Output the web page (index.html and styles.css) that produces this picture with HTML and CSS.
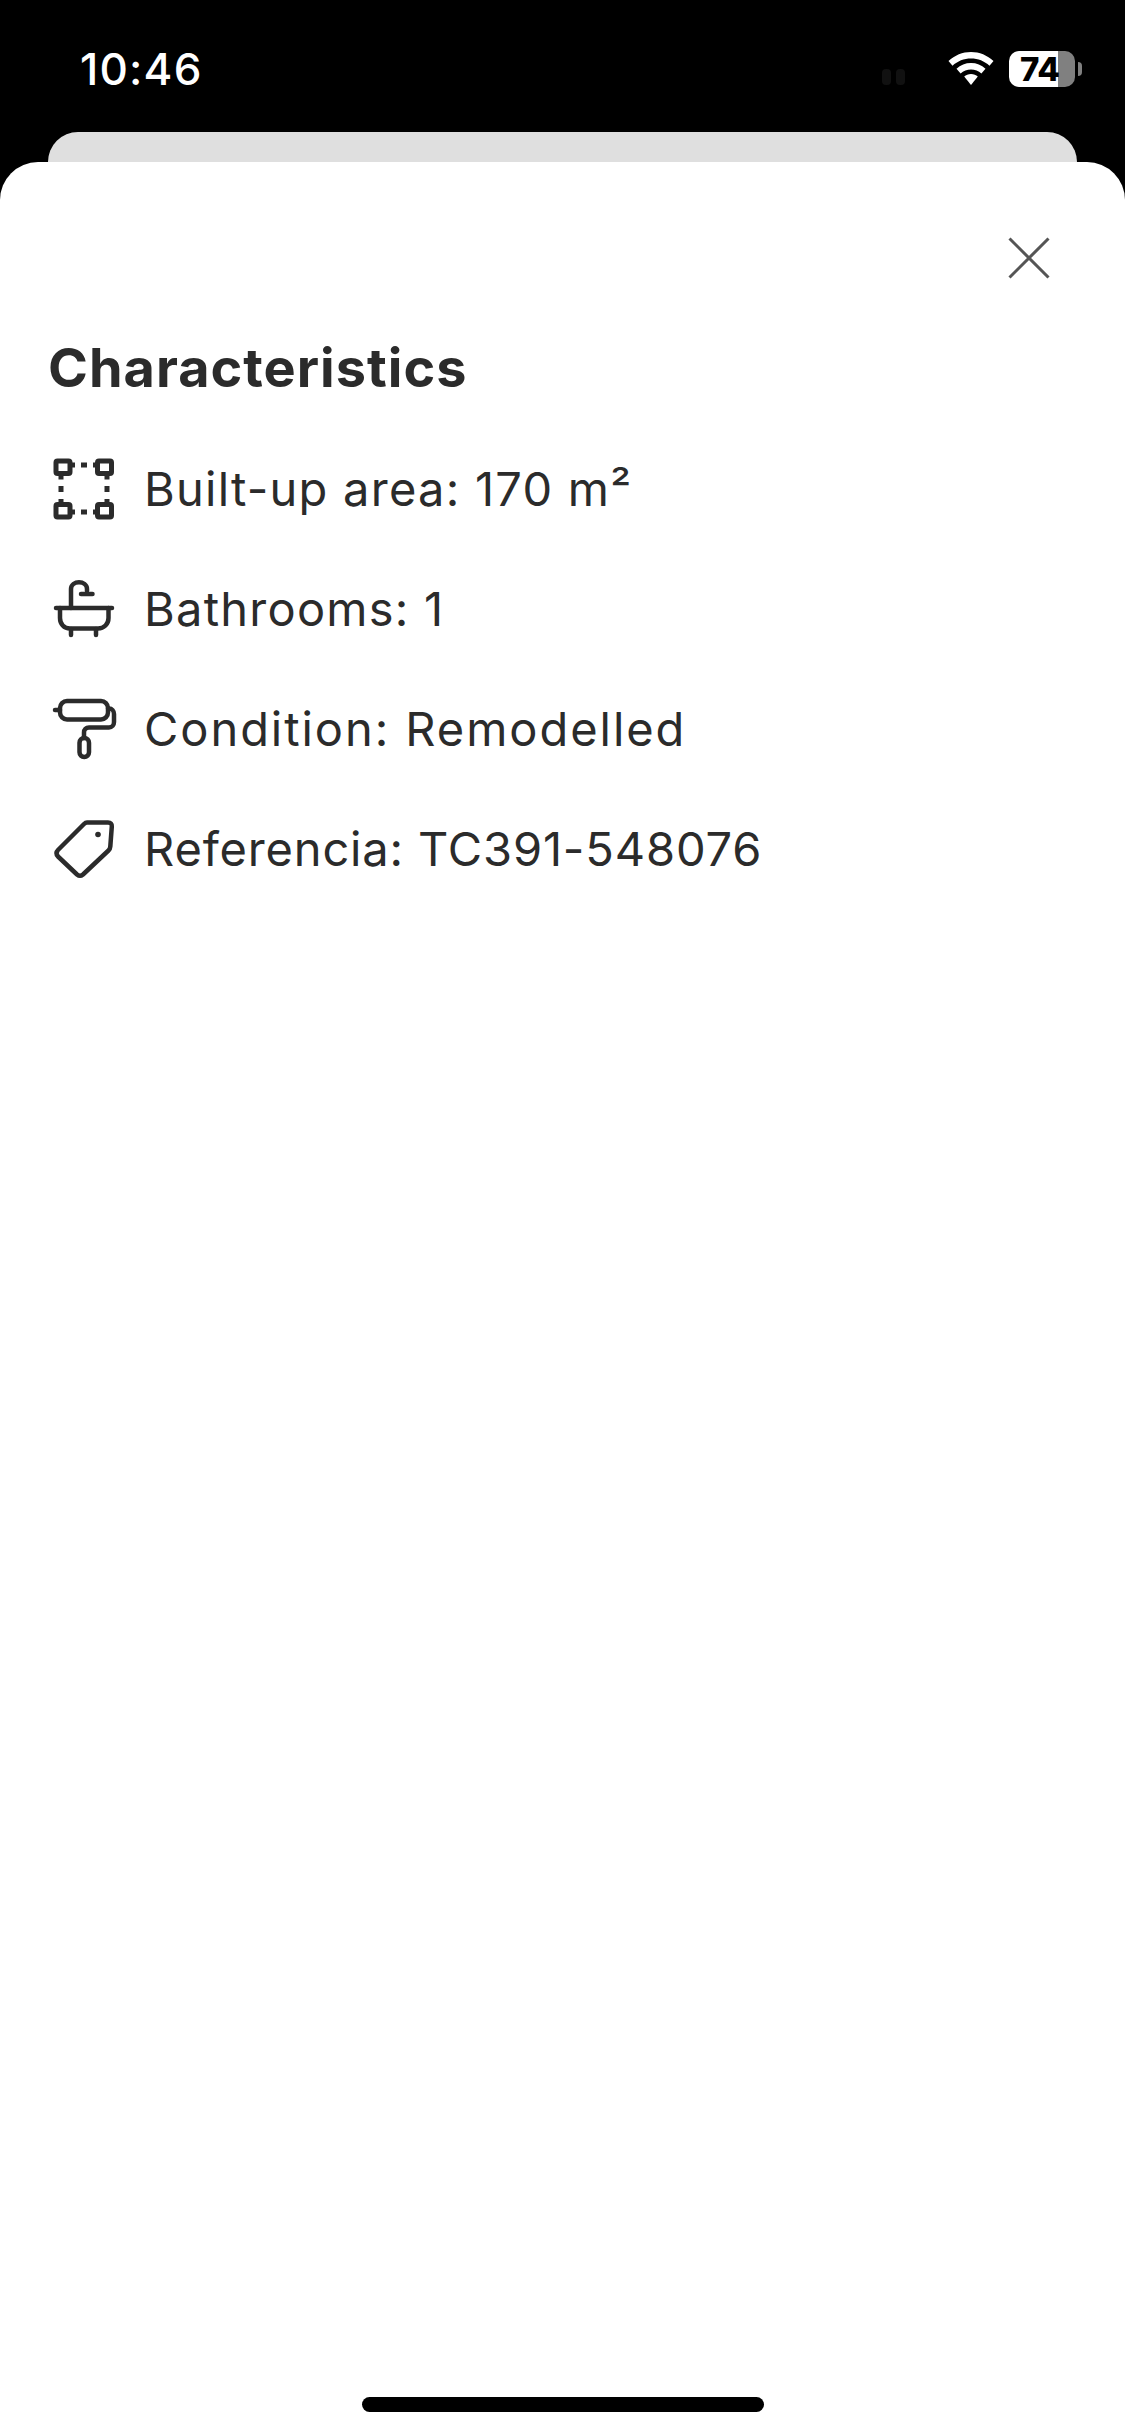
FILE: index.html
```html
<!DOCTYPE html>
<html lang="en">
<head>
<meta charset="utf-8">
<title>Characteristics</title>
<link rel="stylesheet" href="styles.css">
</head>
<body>
<div class="screen">
  <header class="status">
    <span class="time">10:46</span>
    <div class="status-right">
      <span class="dots"><i></i><i></i></span>
      <svg class="wifi" width="46" height="34" viewBox="0 0 46 34"><path d="M23 0C14.500 0 6.700 3.300 0.500 9L4.500 13.800C9.500 9 16 6.500 23 6.500S36.500 9 41.500 13.800L45.500 9C39.300 3.300 31.500 0 23 0Z" fill="#fff"/><path d="M23 11C17.500 11 12.500 13 8.500 16.800L12.600 21.600C15.500 19 19 17.500 23 17.500S30.500 19 33.400 21.600L37.500 16.800C33.500 13 28.500 11 23 11Z" fill="#fff"/><path d="M23 22C20.300 22 18 23 16.200 24.500L23 33L29.800 24.500C28 23 25.700 22 23 22Z" fill="#fff"/></svg>
      <div class="battery">
        <div class="battery-body"><span class="battery-level">74</span></div>
        <span class="battery-tip"></span>
      </div>
    </div>
  </header>
  <div class="back-card"></div>
  <main class="sheet">
    <div class="sheet-top">
      <svg class="close" width="42" height="42" viewBox="0 0 42 42"><path d="M1.500 1.500L40.500 40.500M40.500 1.500L1.500 40.500" stroke="#555" stroke-width="3" fill="none"/></svg>
    </div>
    <h1 class="title">Characteristics</h1>
    <ul class="list">
      <li class="row">
        <svg class="icon" width="72" height="72" viewBox="0 0 72 72"><g fill="none" stroke="#2b2b2b" stroke-width="5" stroke-linejoin="round"><rect x="8" y="8" width="14" height="12.500" rx="1.500"/><rect x="49.500" y="8" width="14" height="12.500" rx="1.500"/><rect x="8" y="51.500" width="14" height="12.500" rx="1.500"/><rect x="49.500" y="51.500" width="14" height="12.500" rx="1.500"/><path d="M22 12h5M13 20v6.500M45 12h5M59 20v6.500M13 52v-6M59 52v-6M22 59h5M45 59h5M33 12h6M33 59h6M13 33v6M59 33v6"/></g></svg>
        <span class="label">Built-up area: 170 m²</span>
      </li>
      <li class="row">
        <svg class="icon" width="72" height="72" viewBox="0 0 72 72"><g fill="none" stroke="#2b2b2b" stroke-width="4.500" stroke-linecap="round" stroke-linejoin="round"><path d="M8 35H64"/><path d="M12 35V45C12 51 16 55.500 22 55.500H50C56 55.500 60.500 51 60.500 45V35"/><path d="M23 56V62M48 56V62"/><path d="M23 35V16C23 7 39 7 39 16V18"/><path d="M33 21H44.500"/></g></svg>
        <span class="label">Bathrooms: 1</span>
      </li>
      <li class="row">
        <svg class="icon" width="72" height="72" viewBox="0 0 72 72"><g fill="none" stroke="#2b2b2b" stroke-width="4.500" stroke-linecap="round" stroke-linejoin="round"><rect x="12" y="8" width="48" height="18.500" rx="7"/><path d="M7 17H12"/><path d="M60 15.500H61C64 15.500 66 18 66 21V29C66 32 64 34.500 61 34.500H41C38 34.500 36 36.500 36 39.500V45"/><rect x="31.500" y="45" width="9.500" height="19" rx="4.700"/></g></svg>
        <span class="label label-wide">Condition: Remodelled</span>
      </li>
      <li class="row">
        <svg class="icon" width="72" height="72" viewBox="0 0 72 72"><path d="M39 9.500H60Q64 9.500 63.800 13.500L62.300 33.500Q62.100 36 60.500 37.500L35 61.500Q32 64 29 61.500L10 43.500Q7 40 10 37L36 11Q37.500 9.500 39 9.500Z" fill="none" stroke="#2b2b2b" stroke-width="4.500" stroke-linejoin="round"/><circle cx="50" cy="21.500" r="2.800" fill="#2b2b2b"/></svg>
        <span class="label label-tight">Referencia: TC391-548076</span>
      </li>
    </ul>
    <div class="home-bar"></div>
  </main>
</div>
</body>
</html>
```

FILE: styles.css
```css
* {
  box-sizing: border-box;
  margin: 0;
  padding: 0;
}

html,
body {
  width: 1125px;
  height: 2436px;
  overflow: hidden;
  background: #000;
}

.screen {
  display: flex;
  flex-direction: column;
  width: 1125px;
  height: 2436px;
  background: #000;
  font-family: Inter, "Liberation Sans", sans-serif;
}

.status {
  display: flex;
  align-items: flex-start;
  justify-content: space-between;
  height: 132px;
  padding: 44px 43px 0 80px;
  color: #fff;
}

.time {
  font-size: 44px;
  line-height: 50px;
  font-weight: 500;
  letter-spacing: 1.2px;
}

.status-right {
  display: flex;
  align-items: flex-start;
  padding-top: 7px;
}

.dots {
  display: flex;
  gap: 5px;
  margin: 18px 43px 0 0;
}

.dots i {
  width: 9px;
  height: 16px;
  border-radius: 4px;
  background: #111;
}

.wifi {
  margin: 1px 15px 0 0;
}

.battery {
  display: flex;
  align-items: center;
  gap: 3px;
}

.battery-body {
  display: flex;
  align-items: center;
  justify-content: center;
  width: 66px;
  height: 36px;
  padding-right: 4px;
  border-radius: 10px;
  background: linear-gradient(to right, #fff 49px, #808080 49px);
}

.battery-level {
  font-size: 33px;
  line-height: 36px;
  font-weight: 800;
  color: #000;
}

.battery-tip {
  width: 4px;
  height: 14px;
  border-radius: 0 4px 4px 0;
  background: #808080;
}

.back-card {
  flex: none;
  height: 30px;
  margin: 0 48px;
  border-radius: 30px 30px 0 0;
  background: #dfdfdf;
}

.sheet {
  display: flex;
  flex: 1;
  flex-direction: column;
  padding: 75px 48px 24px;
  border-radius: 38px 38px 0 0;
  background: #fff;
  color: #2b2b2b;
}

.sheet-top {
  display: flex;
  justify-content: flex-end;
  padding-right: 27px;
}

.title {
  margin-top: 55px;
  font-size: 54px;
  line-height: 68px;
  font-weight: 700;
  letter-spacing: 1px;
}

.list {
  display: flex;
  flex: 1;
  flex-direction: column;
  gap: 48px;
  margin-top: 51px;
  list-style: none;
}

.row {
  display: flex;
  align-items: center;
  gap: 24px;
  height: 72px;
}

.icon {
  flex: none;
}

.label {
  font-size: 47px;
  line-height: 60px;
  font-weight: 400;
  letter-spacing: 1.25px;
}

.label-wide {
  letter-spacing: 1.95px;
}

.label-tight {
  letter-spacing: 0.85px;
}

.home-bar {
  align-self: center;
  width: 402px;
  height: 15px;
  border-radius: 8px;
  background: #000;
}
```
